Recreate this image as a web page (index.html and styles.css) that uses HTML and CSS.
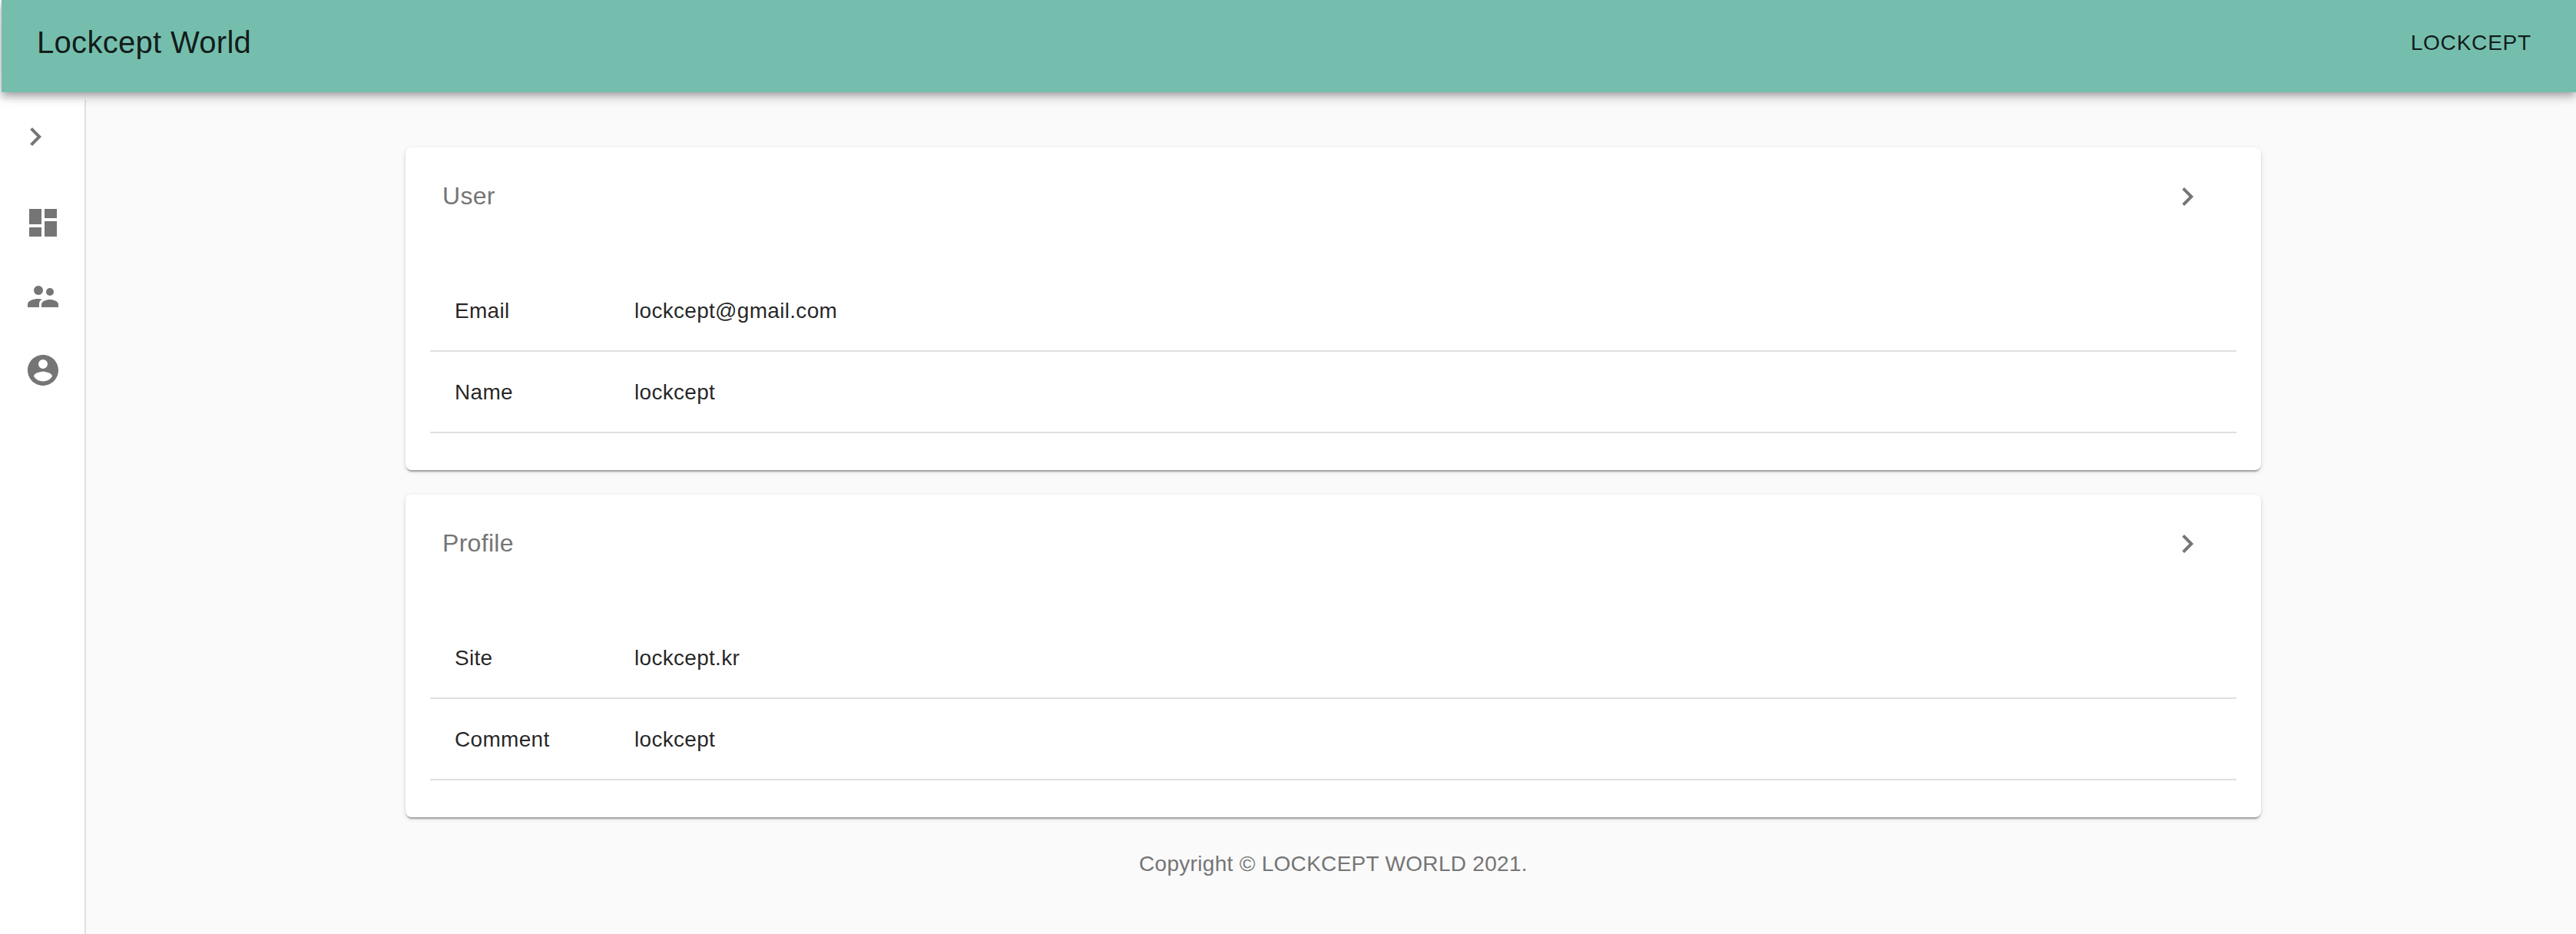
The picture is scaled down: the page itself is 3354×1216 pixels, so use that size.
FILE: index.html
```html
<!DOCTYPE html>
<html lang="en">
<head>
  <meta charset="UTF-8">
  <title>Lockcept World</title>
  <link rel="stylesheet" href="styles.css">
</head>
<body>
  <header class="topbar">
    <span class="brand">Lockcept World</span>
    <span class="user-button">LOCKCEPT</span>
  </header>

  <div class="shell">
    <nav class="sidebar">
      <span class="icon-button toggle">
        <svg class="icon" viewBox="0 0 24 24"><path d="M10 6 8.59 7.41 13.17 12l-4.58 4.59L10 18l6-6z"/></svg>
      </span>
      <div class="nav-list">
        <span class="nav-item">
          <svg class="icon" viewBox="0 0 24 24"><path d="M3 13h8V3H3v10zm0 8h8v-6H3v6zm10 0h8V11h-8v10zm0-18v6h8V3h-8z"/></svg>
        </span>
        <span class="nav-item">
          <svg class="icon" viewBox="0 0 24 24"><circle cx="9" cy="8" r="3"/><circle cx="16.5" cy="9" r="2.5"/><path d="M2 19v-2c0-2.2 4-3.5 7-3.5.8 0 1.7.1 2.5.3-1.4.8-2 1.9-2 3.2v2z"/><path d="M11 19v-1.8c0-2 3-3.2 5.5-3.2s5.500 1.200 5.500 3.200V19z"/></svg>
        </span>
        <span class="nav-item">
          <svg class="icon" viewBox="0 0 24 24"><path d="M12 2C6.480 2 2 6.480 2 12s4.480 10 10 10 10-4.480 10-10S17.520 2 12 2zm0 3a3 3 0 1 1 0 6 3 3 0 0 1 0-6zm0 14.200a7.200 7.200 0 0 1-6-3.220c.030-1.990 4-3.080 6-3.080s5.970 1.090 6 3.080a7.200 7.200 0 0 1-6 3.220z"/></svg>
        </span>
      </div>
    </nav>

    <main class="content">
      <section class="card">
        <div class="card-head">
          <span class="card-title">User</span>
          <span class="icon-button">
            <svg class="icon" viewBox="0 0 24 24"><path d="M10 6 8.59 7.41 13.17 12l-4.58 4.59L10 18l6-6z"/></svg>
          </span>
        </div>
        <table class="info-table">
          <tr><td class="label">Email</td><td>lockcept@gmail.com</td></tr>
          <tr><td class="label">Name</td><td>lockcept</td></tr>
        </table>
      </section>

      <section class="card">
        <div class="card-head">
          <span class="card-title">Profile</span>
          <span class="icon-button">
            <svg class="icon" viewBox="0 0 24 24"><path d="M10 6 8.59 7.41 13.17 12l-4.58 4.59L10 18l6-6z"/></svg>
          </span>
        </div>
        <table class="info-table">
          <tr><td class="label">Site</td><td>lockcept.kr</td></tr>
          <tr><td class="label">Comment</td><td>lockcept</td></tr>
        </table>
      </section>

      <footer class="copyright">Copyright © LOCKCEPT WORLD 2021.</footer>
    </main>
  </div>
</body>
</html>
```

FILE: styles.css
```css
* {
  box-sizing: border-box;
}
html, body {
  height: 100%;
}
body {
  margin: 0;
  background-color: #fafafa;
  font-family: "Liberation Sans", Arial, sans-serif;
  color: rgba(0, 0, 0, 0.87);
  overflow: hidden;
}
.topbar {
  position: relative;
  z-index: 2;
  height: 120px;
  margin-left: 2px;
  padding: 0 58px 8px 46px;
  display: flex;
  align-items: center;
  justify-content: space-between;
  background-color: #75bead;
  box-shadow: 0 4px 8px -2px rgba(0, 0, 0, 0.2), 0 8px 10px rgba(0, 0, 0, 0.14), 0 2px 20px rgba(0, 0, 0, 0.12);
}
.brand {
  font-size: 40px;
  letter-spacing: 0.3px;
  margin-bottom: 2px;
}
.user-button {
  font-size: 28px;
  letter-spacing: 0.8px;
}
.shell {
  display: flex;
  height: calc(100% - 120px);
}
.sidebar {
  width: 112px;
  margin-top: 10px;
  flex-shrink: 0;
  background-color: #fff;
  border-right: 2px solid #e0e0e0;
}
.icon-button {
  display: block;
  width: 48px;
  height: 48px;
}
.toggle {
  margin: 24px 0 0 22px;
}
.nav-list {
  margin-top: 52px;
  display: flex;
  flex-direction: column;
  padding-left: 32px;
}
.nav-item {
  display: block;
  width: 48px;
  height: 48px;
  margin-top: 48px;
}
.nav-item:first-child {
  margin-top: 12px;
}
.icon {
  display: block;
  width: 48px;
  height: 48px;
  fill: #757575;
}
.content {
  flex: 1;
  padding: 72px 410px 0 416px;
}
.card {
  height: 420px;
  margin-bottom: 32px;
  padding: 16px 32px 0;
  background-color: #fff;
  border-radius: 8px;
  box-shadow: 0 4px 2px -2px rgba(0, 0, 0, 0.2), 0 2px 2px rgba(0, 0, 0, 0.14), 0 2px 6px rgba(0, 0, 0, 0.12);
}
.card-head {
  display: flex;
  align-items: center;
  justify-content: space-between;
  height: 96px;
  padding: 0 40px 0 16px;
}
.card-title {
  font-size: 32px;
  letter-spacing: 0.3px;
  color: #757575;
  margin-bottom: 2px;
}
.info-table {
  width: 100%;
  margin-top: 47px;
  border-collapse: collapse;
  font-size: 28px;
  letter-spacing: 0.3px;
}
.info-table td {
  height: 106px;
  padding: 2px 32px 0;
  border-bottom: 2px solid #e0e0e0;
}
.info-table .label {
  width: 234px;
}
.copyright {
  margin-top: 14px;
  text-align: center;
  font-size: 28px;
  letter-spacing: 0.3px;
  color: #757575;
  padding-top: 13px;
}
```
